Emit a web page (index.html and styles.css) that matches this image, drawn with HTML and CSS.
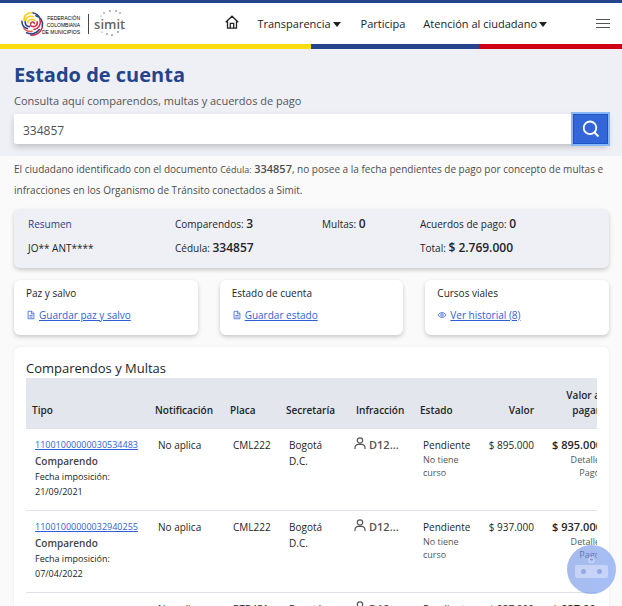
FILE: index.html
```html
<!DOCTYPE html>
<html lang="es">
<head>
<meta charset="utf-8">
<meta name="viewport" content="width=device-width, initial-scale=1">
<title>Estado de cuenta - Simit</title>
<link rel="stylesheet" href="styles.css">
</head>
<body>
<svg class="sprite" aria-hidden="true">
  <symbol id="doc" viewBox="0 0 10 12"><path d="M1.500 1.500h4.500l2.500 2.500v6.500h-7zM5.500 1.500v3h3M3 6.500h4M3 8.500h4" fill="none" stroke="currentColor"/></symbol>
  <symbol id="eye" viewBox="0 0 12 10"><path d="M1 5q5-6 10 0q-5 6-10 0z" fill="none" stroke="currentColor"/><circle cx="6" cy="5" r="1.500" fill="none" stroke="currentColor"/></symbol>
  <symbol id="person" viewBox="0 0 12 12"><circle cx="6" cy="3.500" r="2.700" fill="none" stroke="currentColor" stroke-width="1.200"/><path d="M1 12v-1q0-3.500 3.500-3.700h3q3.500.2 3.500 3.700v1" fill="none" stroke="currentColor" stroke-width="1.200"/></symbol>
</svg>

<header class="header">
  <div class="brand">
    <svg class="swirl" viewBox="0 0 26 28" fill="none" stroke-linecap="round" aria-hidden="true">
      <g stroke-width="1.700">
        <path stroke="#f3cf24" d="M3.500 10C2.500 5 7 1.500 12.500 1.500M5 11C4.500 7.500 9 4.500 13.500 6M7.500 13C7.500 9 12 8 15 10"/>
        <path stroke="#2d4794" d="M13 2C17 2.500 19.500 5 20.500 8M16 5C21 6 24.500 11 23 17M1 11C1 16 3 18 7 19M4.500 11.500C4.500 14.500 6.500 16.500 9 17"/>
        <path stroke="#d22b45" d="M20.500 9C22 14 19.500 19 14 20M17.500 11.500C18.500 16 13.500 18.500 10 15.500M10.500 14C10.500 11.500 14 11 14.500 13.500"/>
        <path stroke="#e2654a" d="M3 18.500C5 21.500 8 22.500 12 22"/>
        <path stroke="#d22b45" d="M23 18C21 23.500 16 26.500 10.500 26"/>
        <path stroke="#2d4794" d="M20 20C17 24.500 11 25.500 6 23.500"/>
      </g>
    </svg>
    <div class="federation">FEDERACIÓN<br>COLOMBIANA<br>DE MUNICIPIOS</div>
    <div class="simit">
      <svg class="dots" viewBox="0 0 32 28" fill="#555" aria-hidden="true"><circle cx="11" cy="4" r=".7"/><circle cx="17" cy="2" r=".8"/><circle cx="23" cy="2" r=".8"/><circle cx="27" cy="4" r=".7"/><circle cx="8" cy="7" r=".5"/><circle cx="9" cy="23" r=".5"/><circle cx="14" cy="25" r=".7"/><circle cx="19" cy="26" r=".8"/><circle cx="25" cy="23" r=".8"/><circle cx="29" cy="20" r=".6"/></svg>
      simit
    </div>
  </div>
  <nav class="nav" aria-label="Principal">
    <a href="#" class="home" aria-label="Inicio"><svg viewBox="0 0 14 14" fill="none" stroke="currentColor" stroke-width="1.300"><path d="M.7 7.300L7 1.200l6.300 6.100M2.500 6v7.200h9V6M5.300 13V8.300h3.400V13"/></svg></a>
    <a href="#" class="drop transparencia">Transparencia</a>
    <a href="#" class="participa">Participa</a>
    <a href="#" class="drop">Atención al ciudadano</a>
  </nav>
  <button class="menu" type="button" aria-label="Menú"><svg viewBox="0 0 14 10" stroke="#555" stroke-width="1"><path d="M0 .5h14M0 4.500h14M0 8.500h14"/></svg></button>
</header>

<main>
  <section class="hero">
    <h1>Estado de cuenta</h1>
    <label for="query">Consulta aquí comparendos, multas y acuerdos de pago</label>
    <form class="search">
      <input id="query" type="text" value="334857">
      <button type="button" aria-label="Buscar"><svg viewBox="0 0 18 18" fill="none" stroke="#fff" stroke-width="1.800"><circle cx="8" cy="7.800" r="6.300"/><path d="M12.500 12.500l4 4"/></svg></button>
    </form>
  </section>

  <div class="content">
    <p class="notice">El ciudadano identificado con el documento <small>Cédula:</small> <b>334857</b>, no posee a la fecha pendientes de pago por concepto de multas e infracciones en los Organismo de Tránsito conectados a Simit.</p>

    <section class="summary">
      <div class="accent">Resumen</div><div>Comparendos: <b>3</b></div><div>Multas: <b>0</b></div><div>Acuerdos de pago: <b>0</b></div>
      <div>JO** ANT****</div><div>Cédula: <b>334857</b></div><div></div><div>Total: <b>$ 2.769.000</b></div>
    </section>

    <section class="cards">
      <div class="card"><h2>Paz y salvo</h2><div class="action"><svg><use href="#doc"/></svg><a href="#">Guardar paz y salvo</a></div></div>
      <div class="card"><h2>Estado de cuenta</h2><div class="action"><svg><use href="#doc"/></svg><a href="#">Guardar estado</a></div></div>
      <div class="card"><h2>Cursos viales</h2><div class="action"><svg><use href="#eye"/></svg><a href="#">Ver historial (8)</a></div></div>
    </section>

    <section class="fines">
      <h2>Comparendos y Multas</h2>
      <div class="scroller">
        <table>
          <colgroup><col class="c-type"><col class="c-notice"><col class="c-plate"><col class="c-office"><col class="c-offence"><col class="c-state"><col class="c-value"><col class="c-total"></colgroup>
          <thead><tr><th>Tipo</th><th>Notificación</th><th>Placa</th><th>Secretaría</th><th>Infracción</th><th>Estado</th><th class="num">Valor</th><th class="num">Valor a pagar</th></tr></thead>
          <tbody>
            <tr><td><a href="#">11001000000030534483</a><b class="kind">Comparendo</b><span class="date">Fecha imposición: 21/09/2021</span></td><td>No aplica</td><td>CML222</td><td>Bogotá D.C.</td><td class="offence"><svg><use href="#person"/></svg><b>D12...</b></td><td>Pendiente<small>No tiene curso</small></td><td class="num">$ 895.000</td><td class="num"><b>$ 895.000</b><small>Detalle Pago</small></td></tr>
            <tr><td><a href="#">11001000000032940255</a><b class="kind">Comparendo</b><span class="date">Fecha imposición: 07/04/2022</span></td><td>No aplica</td><td>CML222</td><td>Bogotá D.C.</td><td class="offence"><svg><use href="#person"/></svg><b>D12...</b></td><td>Pendiente<small>No tiene curso</small></td><td class="num">$ 937.000</td><td class="num"><b>$ 937.000</b><small>Detalle Pago</small></td></tr>
            <tr><td></td><td>No aplica</td><td>BTB451</td><td>Bogotá D.C.</td><td class="offence"><svg><use href="#person"/></svg><b>D12...</b></td><td>Pendiente<small>No tiene curso</small></td><td class="num">$ 937.000</td><td class="num"><b>$ 937.000</b><small>Detalle Pago</small></td></tr>
          </tbody>
        </table>
      </div>
    </section>
  </div>
</main>

<button class="bot" type="button" aria-label="Asistente virtual"><svg viewBox="0 0 49 49"><circle cx="24.500" cy="15" r="2.500" fill="none" stroke="#d7e0f8" stroke-width="1.500"/><rect x="8" y="20" width="33" height="13" rx="2" fill="#d3ddf9"/><circle cx="16.500" cy="26.500" r="2.500" fill="#8b9fdb"/><circle cx="32.500" cy="26.500" r="2.500" fill="#8b9fdb"/></svg></button>
</body>
</html>
```

FILE: styles.css
```css
* { box-sizing: border-box; }
html { scrollbar-width: none; }
body { margin: 0; background: #fafafa; color: #212529; font: 10px/16px "Open Sans", "Noto Sans", sans-serif; }
h1, h2, p { margin: 0; }
button { padding: 0; border: 0; background: none; cursor: pointer; }
svg { display: block; }
b { font-weight: 600; }
a { color: #2f5fd8; }
.sprite { position: absolute; width: 0; height: 0; }

.header { position: relative; display: flex; align-items: center; height: 49px; padding: 0 12px 0 21px; border-top: 3px solid #24448c; background: #fff; }
.header::after { content: ""; position: absolute; left: 0; right: 0; bottom: 0; height: 5px; background: linear-gradient(90deg, #fbdc10 50%, #24448c 50% 77%, #cf0013 77%); }
.brand { display: flex; align-items: center; padding-bottom: 5px; }
.swirl { flex: none; width: 24px; height: 28px; }
.federation { margin: 3px 0 0 -3px; font: 5px/7px "Liberation Sans", sans-serif; color: #000; text-align: right; white-space: nowrap; }
.simit { position: relative; margin-left: 8px; padding-left: 5px; border-left: 1px solid #444; font: 600 13px/20px "Open Sans", sans-serif; color: #666; }
.dots { position: absolute; left: 4px; top: -5px; width: 32px; height: 28px; }
.nav { display: flex; align-items: center; margin-left: auto; padding-bottom: 4px; font-size: 11px; }
.nav a { color: #222; text-decoration: none; white-space: nowrap; }
.home { margin-right: 18px; }
.home svg { width: 14px; height: 14px; margin-bottom: 5px; }
.drop { display: flex; align-items: center; gap: 2px; }
.drop::after { content: ""; border: 4px solid transparent; border-top: 5px solid #222; border-bottom: 0; }
.transparencia { margin-right: 20px; }
.participa { margin-right: 18px; }
.menu { margin-left: 49px; padding-bottom: 5px; }
.menu svg { width: 14px; height: 10px; }

.hero { padding: 13px 14px 12px; background: #efeff6; }
h1 { color: #24448c; font-size: 20px; line-height: 26px; font-weight: 700; }
.hero label { display: block; margin-top: 5px; color: #555; font-size: 11px; }
.search { display: flex; height: 30px; margin-top: 5px; background: #fff; border-radius: 3px; box-shadow: 0 3px 6px #0003; }
.search input { flex: 1; min-width: 0; padding: 2px 9px 0; border: 0; border-radius: 3px; outline: 0; background: #fff; color: #495057; font: 12px "Open Sans", sans-serif; }
.search button { display: grid; place-items: center; width: 35px; background: #3366d9; border: 1px solid #1b55c4; box-shadow: 0 0 0 2px #86b7fa; }
.search svg { width: 18px; height: 18px; }

.content { padding: 2px 13px 0 14px; }
.notice { color: #4d4d4d; line-height: 21px; }
.notice b { font-size: 11px; }
.notice small { font-size: 9px; }
.summary { display: grid; grid-template-columns: 147fr 147fr 98fr 175fr; row-gap: 4px; margin-top: 8px; padding: 5px 14px 10px; background: #efeff6; border-radius: 6px; box-shadow: 0 2px 4px #0003; line-height: 20px; }
.summary b { font-size: 12px; }
.accent { color: #24448c; }
.cards { display: grid; grid-template-columns: repeat(3, 1fr); gap: 22px; margin-top: 12px; }
.card { padding: 5px 12px 12px; background: #fff; border-radius: 6px; box-shadow: 0 2px 4px #0003; }
.card h2 { font-size: 10px; line-height: 16px; font-weight: 400; }
.action { display: flex; align-items: center; gap: 3px; margin-top: 6px; color: #4169e1; }
.action svg { width: 10px; height: 10px; }

.fines { margin-top: 12px; padding: 12px; background: #fff; border-radius: 6px; box-shadow: 0 0 3px #0001; }
.fines h2 { font-size: 13px; line-height: 19px; font-weight: 500; }
.scroller { overflow-x: auto; scrollbar-width: none; }
table { width: 580px; table-layout: fixed; border-collapse: collapse; }
.c-type { width: 123px; }
.c-notice { width: 75px; }
.c-plate { width: 56px; }
.c-office { width: 70px; }
.c-offence { width: 64px; }
.c-state { width: 60px; }
.c-value { width: 66px; }
.c-total { width: 66px; }
th { height: 50px; padding: 6px 6px 10px; background: #e3e6ed; font-size: 10px; font-weight: 600; line-height: 15px; text-align: left; vertical-align: bottom; }
td { height: 82px; padding: 8px 6px 6px 9px; border-top: 1px solid #dee2e6; vertical-align: top; }
td > a { display: block; font-size: 9px; line-height: 16px; }
.kind { display: block; color: #444; }
.date { display: block; font-size: 9px; line-height: 15px; padding-right: 24px; }
td small { display: block; font-size: 9px; line-height: 13px; color: #555; }
td:nth-child(4) { padding-right: 26px; }
td:nth-child(6) small { padding-right: 8px; }
td.offence { padding-left: 4px; color: #555; white-space: nowrap; }
.offence b, .num b { font-size: 11px; }
.offence svg { display: inline-block; width: 12px; height: 12px; margin-right: 3px; }
th.num, td.num { text-align: right; }
td.num { padding-left: 0; }
td.num:last-child { padding-right: 4px; }
td.num small { padding: 0 2px 0 30px; }

.bot { position: fixed; right: 6px; bottom: 12px; width: 49px; height: 49px; border-radius: 50%; background: linear-gradient(110deg, #6284db90, #7fa4f5b0); }
.bot svg { opacity: .7; }
```
